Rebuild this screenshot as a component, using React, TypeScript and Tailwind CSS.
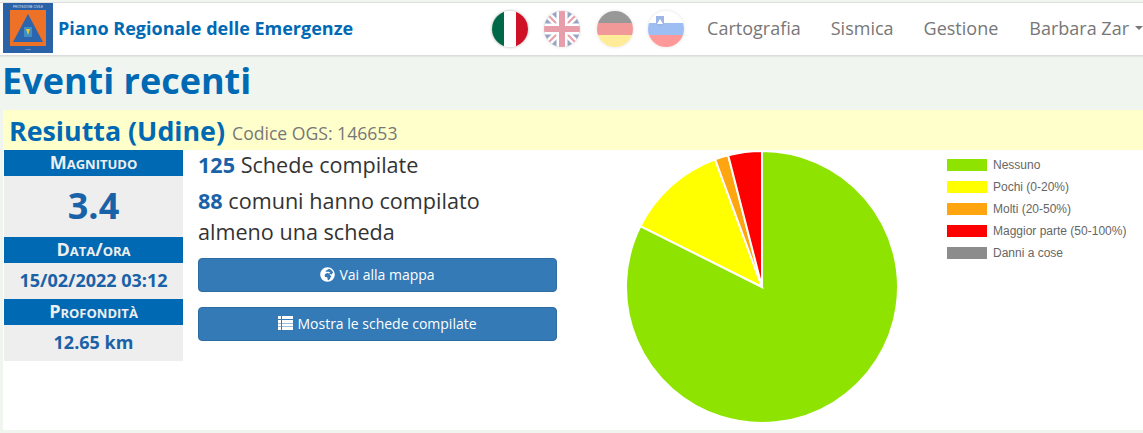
import { FaGlobeAfrica } from "react-icons/fa";

const slices = [
  { color: "#8ee400", from: 0, to: 296.64 },
  { color: "#ffff00", from: 296.64, to: 339.84 },
  { color: "#ffa50f", from: 339.84, to: 345.6 },
  { color: "#ff0000", from: 345.6, to: 360 },
];

const legend = [
  { color: "bg-[#8ee400]", label: "Nessuno" },
  { color: "bg-[#ffff00]", label: "Pochi (0-20%)" },
  { color: "bg-[#ffa50f]", label: "Molti (20-50%)" },
  { color: "bg-[#ff0000]", label: "Maggior parte (50-100%)" },
  { color: "bg-[#8c8c8c]", label: "Danni a cose" },
];

function slicePath(from: number, to: number) {
  const r = 136;
  const c = 137;
  const a = ((from - 90) * Math.PI) / 180;
  const b = ((to - 90) * Math.PI) / 180;
  const large = to - from > 180 ? 1 : 0;
  return `M${c} ${c}L${c + r * Math.cos(a)} ${c + r * Math.sin(a)}A${r} ${r} 0 ${large} 1 ${c + r * Math.cos(b)} ${c + r * Math.sin(b)}Z`;
}

function Logo() {
  return (
    <svg width="50" height="50" viewBox="0 0 50 50" className="shrink-0">
      <rect width="50" height="50" fill="#2a62a8" />
      <rect x="7" y="7" width="36" height="36" fill="#ee7128" />
      <polygon points="25,11 40,39 10,39" fill="#2b65ad" />
      <rect x="21" y="24" width="8" height="10" fill="#3f8fc4" />
      <polygon points="23,26 27,26 25,32" fill="#e8c92c" />
      <text x="25" y="5" textAnchor="middle" fontSize="3" fill="#dfe8f2" fontFamily="Liberation Sans, sans-serif">
        PROTEZIONE CIVILE
      </text>
      <text x="25" y="47" textAnchor="middle" fontSize="2.5" fill="#dfe8f2" fontFamily="Liberation Sans, sans-serif">
        FVG
      </text>
    </svg>
  );
}

function ListIcon() {
  return (
    <svg width="15" height="14" viewBox="0 0 15 14" fill="#ffffff">
      {[0, 4, 7.5, 11].map((y) => (
        <g key={y}>
          <rect x="0" y={y} width="3" height="3" />
          <rect x="4" y={y} width="11" height="3" />
        </g>
      ))}
    </svg>
  );
}

function Flag({ children, dim, className }: { children: React.ReactNode; dim?: boolean; className?: string }) {
  return (
    <div className={`mt-[2px] size-[36px] shrink-0 overflow-hidden rounded-full shadow-[0_0_3px_rgba(0,0,0,0.35)] ${dim ? "opacity-40" : ""} ${className ?? ""}`}>
      <svg width="36" height="36" viewBox="0 0 36 36">
        {children}
      </svg>
    </div>
  );
}

function Navbar() {
  return (
    <div className="mt-[2px] flex h-[54px] items-center border-y border-t-[#dddddd] border-b-[#dddddd] bg-white pb-[2px] pl-[3px] shadow-[0_1px_1px_rgba(0,0,0,0.05)]">
      <Logo />
      <span className="ml-[5px] text-[18px] font-bold text-[#0069b4]">Piano Regionale delle Emergenze</span>
      <div className="ml-auto flex items-center">
        <Flag className="mr-[16px]">
          <rect width="12" height="36" fill="#006847" />
          <rect x="12" width="12" height="36" fill="#ffffff" />
          <rect x="24" width="12" height="36" fill="#ce1126" />
        </Flag>
        <Flag dim className="mr-[17px]">
          <rect width="36" height="36" fill="#012169" />
          <path d="M0 0L36 36M36 0L0 36" stroke="#ffffff" strokeWidth="7" />
          <path d="M0 0L36 36M36 0L0 36" stroke="#c8102e" strokeWidth="2" />
          <path d="M18 0V36M0 18H36" stroke="#ffffff" strokeWidth="11" />
          <path d="M18 0V36M0 18H36" stroke="#c8102e" strokeWidth="6" />
        </Flag>
        <Flag dim className="mr-[15px]">
          <rect width="36" height="12" fill="#000000" />
          <rect y="12" width="36" height="12" fill="#dd0000" />
          <rect y="24" width="36" height="12" fill="#ffce00" />
        </Flag>
        <Flag dim className="mr-[23px]">
          <rect width="36" height="12" fill="#ffffff" />
          <rect y="12" width="36" height="12" fill="#0b5ee0" />
          <rect y="24" width="36" height="12" fill="#ff0000" />
          <path d="M8 5H16V13Q12 18 8 13Z" fill="#0b4ec0" />
          <path d="M9 13L12 8L15 13Z" fill="#ffffff" />
        </Flag>
        <div className="flex items-center text-[18px] text-[#777777]">
          <span className="mr-[30px]">Cartografia</span>
          <span className="mr-[30px]">Sismica</span>
          <span className="mr-[31px]">Gestione</span>
          <span>Barbara Zar</span>
          <span className="ml-[6px] size-0 border-x-[4px] border-t-[4px] border-x-transparent border-t-[#777777]" />
        </div>
      </div>
    </div>
  );
}

function InfoBlock({ title, value, valueClass }: { title: string; value: string; valueClass: string }) {
  return (
    <div>
      <div className="flex h-[26px] items-center justify-center bg-[#0069b4] pb-[2px] text-[18px] font-bold text-[#eeeeee] [font-variant:small-caps]">
        {title}
      </div>
      <div className={`flex items-center justify-center bg-[#eeeeee] pb-[2px] font-bold text-[#1a62a8] ${valueClass}`}>{value}</div>
    </div>
  );
}

function ActionButton({ icon, label }: { icon: React.ReactNode; label: string }) {
  return (
    <button className="flex h-[34px] w-[359px] items-center justify-center gap-[4px] rounded-[4px] border border-[#2e6da4] bg-[#337ab7] pb-[2px] text-[14px] text-white">
      {icon}
      {label}
    </button>
  );
}

export default function App() {
  return (
    <div className="h-[433px] w-[1143px] overflow-hidden bg-[#f0f5f0] font-['Open_Sans',sans-serif]">
      <Navbar />
      <h1 className="ml-[2px] text-[36px] font-bold leading-[50px] text-[#0069b4]">Eventi recenti</h1>
      <div className="ml-[3px] mt-[4px] h-[320px] bg-white">
        <div className="flex h-[40px] items-center bg-[#ffffcc] pl-[6px] pt-[2px]">
          <span className="text-[26.8px] font-bold text-[#0069b4]">Resiutta (Udine)</span>
          <span className="ml-[7px] mt-[4px] text-[17.6px] text-[#777777]">Codice OGS: 146653</span>
        </div>
        <div className="flex">
          <div className="ml-[1px] w-[179px]">
            <InfoBlock title="Magnitudo" value="3.4" valueClass="h-[61px] text-[36px]" />
            <InfoBlock title="Data/ora" value="15/02/2022 03:12" valueClass="h-[36px] text-[18px]" />
            <InfoBlock title="Profondità" value="12.65 km" valueClass="h-[36px] text-[18px]" />
          </div>
          <div className="ml-[15px] w-[359px]">
            <p className="h-[32px] text-[21.6px] leading-[30px] text-[#333333]">
              <b className="font-bold text-[#1a62a8]">125</b> Schede compilate
            </p>
            <p className="mt-[3px] text-[21.6px] leading-[31px] text-[#333333]">
              <b className="font-bold text-[#1a62a8]">88</b> comuni hanno compilato
              <br />
              almeno una scheda
            </p>
            <div className="mt-[11px] flex flex-col gap-[15px]">
              <ActionButton icon={<FaGlobeAfrica className="size-[15px]" />} label="Vai alla mappa" />
              <ActionButton icon={<ListIcon />} label="Mostra le schede compilate" />
            </div>
          </div>
          <svg width="274" height="274" viewBox="0 0 274 274" className="ml-[68px] shrink-0">
            {slices.map((s) => (
              <path key={s.color} d={slicePath(s.from, s.to)} fill={s.color} stroke="#ffffff" strokeWidth="2" />
            ))}
          </svg>
          <ul className="ml-[48px] mt-[4px] font-['Liberation_Sans',sans-serif] text-[12px] leading-[22px] text-[#666666]">
            {legend.map((item) => (
              <li key={item.label} className="flex items-center">
                <span className={`mr-[6px] h-[12px] w-[40px] ${item.color}`} />
                {item.label}
              </li>
            ))}
          </ul>
        </div>
      </div>
    </div>
  );
}
